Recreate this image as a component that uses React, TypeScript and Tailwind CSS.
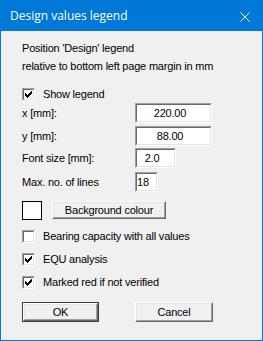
import { ReactNode } from "react";

const Sunken = ({ className, children }: { className: string; children?: ReactNode }) => (
  <div className={`border border-t-[#a0a0a0] border-l-[#a0a0a0] border-b-white border-r-white ${className}`}>
    <div className="h-full w-full border border-t-[#696969] border-l-[#696969] border-b-[#e3e3e3] border-r-[#e3e3e3] bg-white">
      {children}
    </div>
  </div>
);

const CheckMark = () => (
  <svg width="7" height="7" viewBox="0 0 7 7" shapeRendering="crispEdges" className="absolute left-[3px] top-[3px]">
    <rect x="6" y="0" width="1" height="1" fill="#000" />
    <rect x="5" y="1" width="2" height="1" fill="#000" />
    <rect x="0" y="2" width="1" height="1" fill="#000" />
    <rect x="4" y="2" width="3" height="1" fill="#000" />
    <rect x="0" y="3" width="2" height="1" fill="#000" />
    <rect x="3" y="3" width="3" height="1" fill="#000" />
    <rect x="0" y="4" width="5" height="1" fill="#000" />
    <rect x="1" y="5" width="3" height="1" fill="#000" />
    <rect x="2" y="6" width="1" height="1" fill="#000" />
  </svg>
);

const CheckRow = ({ label, checked, className }: { label: string; checked?: boolean; className: string }) => (
  <div className={`flex h-[13px] items-center ${className}`}>
    <div className="relative h-[13px] w-[13px]">
      <Sunken className="h-[13px] w-[13px]" />
      {checked && <CheckMark />}
    </div>
    <span className="ml-[8px] leading-[13px]">{label}</span>
  </div>
);

const FieldRow = ({ label, value, width, className }: { label: string; value: string; width: string; className: string }) => (
  <div className={`flex h-[20px] items-center ${className}`}>
    <span className="w-[113px]">{label}</span>
    <Sunken className={`h-[20px] ${width}`}>
      <div className="flex h-full items-center justify-center pr-[7px] leading-none">{value}</div>
    </Sunken>
  </div>
);

const Raised = ({ className, children }: { className: string; children: ReactNode }) => (
  <div className={`border border-t-white border-l-white border-b-[#696969] border-r-[#696969] ${className}`}>
    <div className="flex h-full w-full items-center justify-center border border-t-[#e3e3e3] border-l-[#e3e3e3] border-b-[#a0a0a0] border-r-[#a0a0a0] bg-[#f0f0f0]">
      {children}
    </div>
  </div>
);

export default function App() {
  return (
    <div
      className="flex h-[341px] w-[263px] flex-col border border-[#0078d7] bg-[#f0f0f0] text-[11px] tracking-[-0.2px] text-black"
      style={{ fontFamily: '"Liberation Sans", Arial, sans-serif' }}
    >
      <div className="flex h-[30px] shrink-0 items-center justify-between bg-[#0078d7] pl-[9px] pr-[12px] text-white">
        <span className="text-[12px] tracking-normal" style={{ fontFamily: '"Open Sans", "Noto Sans", sans-serif' }}>
          Design values legend
        </span>
        <svg width="10" height="10" viewBox="0 0 10 10" className="mt-[1px]">
          <path d="M0.5 0.5 L9.5 9.5 M9.5 0.5 L0.5 9.5" stroke="#fff" strokeWidth="1" />
        </svg>
      </div>

      <div className="flex flex-col pl-[21px] pt-[8px]">
        <p className="leading-[18px]">
          Position 'Design' legend
          <br />
          relative to bottom left page margin in mm
        </p>

        <CheckRow label="Show legend" checked className="mt-[13px]" />

        <FieldRow label="x [mm]:" value="220.00" width="w-[77px]" className="mt-[2px]" />
        <FieldRow label="y [mm]:" value="88.00" width="w-[77px]" className="mt-[3px]" />
        <FieldRow label="Font size [mm]:" value="2.0" width="w-[41px]" className="mt-[2px]" />
        <FieldRow label="Max. no. of lines" value="18" width="w-[23px]" className="mt-[4px]" />

        <div className="mt-[9px] flex items-start">
          <div className="h-[19px] w-[20px] border border-black bg-white" />
          <Raised className="ml-[10px] h-[18px] w-[114px]">
            <span>Background colour</span>
          </Raised>
        </div>

        <CheckRow label="Bearing capacity with all values" className="mt-[10px]" />
        <CheckRow label="EQU analysis" checked className="mt-[10px]" />
        <CheckRow label="Marked red if not verified" checked className="mt-[10px]" />

        <div className="mt-[13px] flex">
          <div className="h-[20px] w-[77px] border border-[#3c3c3c]">
            <Raised className="h-full w-full">
              <span>OK</span>
            </Raised>
          </div>
          <Raised className="ml-[36px] h-[20px] w-[78px]">
            <span>Cancel</span>
          </Raised>
        </div>
      </div>
    </div>
  );
}
